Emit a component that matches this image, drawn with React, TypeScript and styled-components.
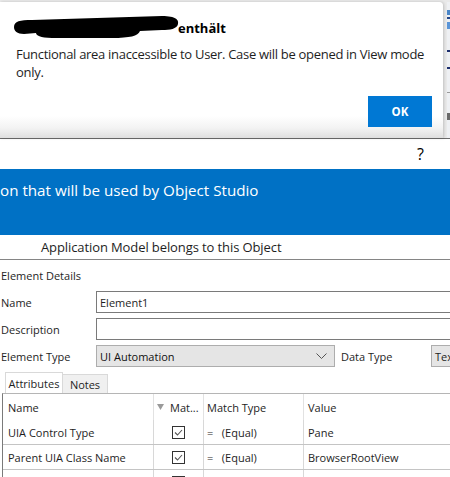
import React from "react";
import styled, { createGlobalStyle } from "styled-components";

const GlobalStyle = createGlobalStyle`
  html, body {
    margin: 0;
    padding: 0;
    background: #fff;
  }
  body {
    width: 450px;
    height: 477px;
    overflow: hidden;
    font-family: "Open Sans", "Noto Sans", sans-serif;
    color: #1e1e1e;
  }
  * {
    box-sizing: border-box;
  }
`;

const attributes = [
  { name: "UIA Control Type", match: true, value: "Pane" },
  { name: "Parent UIA Class Name", match: true, value: "BrowserRootView" },
  { name: "UIA Name", match: false, value: "AAS" },
];

const stripMarks = [
  { mt: 8, h: 5, c: "#4a86c8" },
  { mt: 2, h: 2, c: "#23468a" },
  { mt: 3, h: 7, c: "#5a95d8" },
  { mt: 21, h: 2, c: "#1d2f6e" },
  { mt: 15, h: 2, c: "#1d2f6e" },
  { mt: 23, h: 1, c: "#9a9a9a" },
  { mt: 20, h: 7, c: "#6a6a6a" },
];

function Redaction() {
  return (
    <svg width="168" height="26" viewBox="0 0 168 26">
      <path
        d="M2 13 C2 7 8 6 20 6 L150 2 C164 2 167 6 166 10 C165 15 158 16 150 16
           L128 17 C126 22 118 24 100 24 L40 24 C28 24 24 21 24 19
           L12 20 C5 20 2 17 2 13 Z"
        fill="#000"
      />
    </svg>
  );
}

function CheckBox({ checked }: { checked: boolean }) {
  return (
    <svg width="13" height="13" viewBox="0 0 13 13">
      <rect x="0.5" y="0.5" width="12" height="12" fill="#fff" stroke="#333" />
      {checked && (
        <polyline
          points="3,6.5 5.5,9 10,4"
          fill="none"
          stroke="#555"
          strokeWidth="1.1"
        />
      )}
    </svg>
  );
}

function App() {
  return (
    <>
      <GlobalStyle />
      <Overlay>
        <Dialog>
          <DialogTitle>
            <Redaction />
            <span>enthält</span>
          </DialogTitle>
          <DialogText>
            Functional area inaccessible to User. Case will be opened in View
            mode only.
          </DialogText>
          <OkButton>OK</OkButton>
        </Dialog>
        <Strip>
          {stripMarks.map((m, i) => (
            <StripMark key={i} $mt={m.mt} $h={m.h} $c={m.c} />
          ))}
        </Strip>
      </Overlay>

      <Window>
        <TitleBar>?</TitleBar>
        <Banner>on that will be used by Object Studio</Banner>
        <SubRow>Application Model belongs to this Object</SubRow>

        <Form>
          <SectionTitle>Element Details</SectionTitle>
          <FieldGrid>
            <Label>Name</Label>
            <TextBox>Element1</TextBox>
            <Label>Description</Label>
            <TextBox />
            <Label>Element Type</Label>
            <TypeRow>
              <Select>
                <span>UI Automation</span>
                <svg width="11" height="6" viewBox="0 0 11 6">
                  <polyline
                    points="0.5,0.5 5.5,5.5 10.5,0.5"
                    fill="none"
                    stroke="#555"
                    strokeWidth="1"
                  />
                </svg>
              </Select>
              <DataTypeLabel>Data Type</DataTypeLabel>
              <DataTypeBox>Tex</DataTypeBox>
            </TypeRow>
          </FieldGrid>
        </Form>

        <Tabs>
          <Tab $active>Attributes</Tab>
          <Tab>Notes</Tab>
        </Tabs>

        <Table>
          <HeaderRow>
            <HeadCell>Name</HeadCell>
            <HeadCell $light>
              <svg width="7" height="6" viewBox="0 0 7 6">
                <polygon points="0,0 7,0 3.5,6" fill="#9a9a9a" />
              </svg>
              <FilterText>Mat...</FilterText>
            </HeadCell>
            <HeadCell>Match Type</HeadCell>
            <HeadCell $last>Value</HeadCell>
          </HeaderRow>
          {attributes.map((a) => (
            <BodyRow key={a.name}>
              <Cell>{a.name}</Cell>
              <Cell $center>
                <CheckBox checked={a.match} />
              </Cell>
              <Cell $pre>{"=   (Equal)"}</Cell>
              <Cell $last>{a.value}</Cell>
            </BodyRow>
          ))}
        </Table>
      </Window>
    </>
  );
}

const Overlay = styled.div`
  display: flex;
  height: 138px;
  padding-top: 2px;
  background: #e9e9e9;
`;

const Dialog = styled.div`
  width: 443px;
  margin-right: 4px;
  display: flex;
  flex-direction: column;
  border-top-right-radius: 4px;
  box-shadow: 1px 0 3px rgba(0, 0, 0, 0.18);
  background: linear-gradient(
    180deg,
    #fff 0,
    #fff 114px,
    #f3f3f3 126px,
    #dedede 136px
  );
`;

const DialogTitle = styled.div`
  display: flex;
  align-items: center;
  height: 26px;
  margin-top: 12px;
  padding-left: 12px;
  font-size: 13px;
  font-weight: 700;
  color: #000;

  svg {
    flex-shrink: 0;
  }

  span {
    margin-left: -2px;
    margin-top: 2px;
  }
`;

const DialogText = styled.div`
  margin-top: 5px;
  padding: 0 16px;
  font-size: 13px;
  letter-spacing: -0.3px;
  line-height: 18px;
  color: #1e1e1e;
`;

const OkButton = styled.button`
  align-self: flex-end;
  width: 64px;
  height: 31px;
  margin-top: 15px;
  margin-right: 11px;
  border: none;
  background: #0078d4;
  color: #fff;
  font-family: "Open Sans", sans-serif;
  font-size: 11.5px;
  font-weight: 700;
  padding: 0;
`;

const Strip = styled.div`
  flex: 1;
  display: flex;
  flex-direction: column;
  background: #eef0f3;
`;

const StripMark = styled.div<{ $mt: number; $h: number; $c: string }>`
  margin-top: ${(p) => p.$mt}px;
  height: ${(p) => p.$h}px;
  background: ${(p) => p.$c};
`;

const Window = styled.div`
  border-top: 1px solid #6b6b6b;
  background: #fff;
`;

const TitleBar = styled.div`
  height: 30px;
  display: flex;
  align-items: center;
  justify-content: flex-end;
  padding-right: 26px;
  font-size: 16px;
  color: #000;
`;

const Banner = styled.div`
  height: 66px;
  padding-top: 11px;
  background: #0071c5;
  color: #fff;
  font-size: 15.2px;
  line-height: 20px;
  white-space: nowrap;
`;

const SubRow = styled.div`
  height: 25px;
  padding-left: 41px;
  border-bottom: 1px solid #858585;
  font-size: 13px;
  letter-spacing: -0.1px;
  line-height: 24px;
`;

const Form = styled.div`
  padding-top: 8px;
  font-size: 11px;
`;

const SectionTitle = styled.div`
  height: 16px;
  line-height: 16px;
  padding-left: 1px;
`;

const FieldGrid = styled.div`
  display: grid;
  grid-template-columns: 96px 1fr;
  grid-auto-rows: 22px;
  row-gap: 5px;
  margin-top: 7px;
`;

const Label = styled.div`
  display: flex;
  align-items: center;
  padding-left: 1px;
`;

const TextBox = styled.div`
  margin-right: -20px;
  padding-left: 3px;
  border: 1px solid #7a7a7a;
  display: flex;
  align-items: center;
`;

const TypeRow = styled.div`
  display: flex;
  margin-right: -20px;
`;

const Select = styled.div`
  width: 239px;
  display: flex;
  align-items: center;
  justify-content: space-between;
  padding: 0 7px 0 3px;
  background: #e5e5e5;
  border: 1px solid #adadad;
  color: #111;
`;

const DataTypeLabel = styled.div`
  width: 96px;
  padding-left: 6px;
  display: flex;
  align-items: center;
`;

const DataTypeBox = styled.div`
  flex: 1;
  display: flex;
  align-items: center;
  padding-left: 3px;
  background: #e5e5e5;
  border: 1px solid #adadad;
`;

const Tabs = styled.div`
  display: flex;
  align-items: flex-end;
  height: 21px;
  margin-top: 5px;
  padding-left: 5px;
  font-size: 11px;
`;

const Tab = styled.div<{ $active?: boolean }>`
  display: flex;
  align-items: center;
  justify-content: center;
  width: ${(p) => (p.$active ? 58 : 45)}px;
  height: ${(p) => (p.$active ? 21 : 19)}px;
  background: ${(p) => (p.$active ? "#fff" : "#f0f0f0")};
  border: 1px solid #d9d9d9;
  border-bottom: none;
  border-left: ${(p) => (p.$active ? "1px solid #d9d9d9" : "none")};
`;

const Table = styled.div`
  margin-left: 2px;
  border-left: 1px solid #7a7a7a;
  border-top: 1px solid #b5b5b5;
  font-size: 11px;
`;

const columns = "151px 50px 100px 1fr";

const HeaderRow = styled.div`
  display: grid;
  grid-template-columns: ${columns};
  height: 26px;
`;

const HeadCell = styled.div<{ $light?: boolean; $last?: boolean }>`
  display: flex;
  align-items: center;
  padding-left: ${(p) => (p.$light ? 3 : p.$last ? 4 : 5)}px;
  border-right: ${(p) => (p.$last ? "none" : "1px solid #e2e2e2")};
  overflow: hidden;
  white-space: nowrap;

  &:nth-child(3) {
    padding-left: 3px;
  }
`;

const FilterText = styled.span`
  margin-left: 6px;
`;

const BodyRow = styled.div`
  display: grid;
  grid-template-columns: ${columns};
  height: 25px;
  border-bottom: 1px solid #c4c4c4;
`;

const Cell = styled.div<{ $center?: boolean; $pre?: boolean; $last?: boolean }>`
  display: flex;
  align-items: center;
  justify-content: ${(p) => (p.$center ? "center" : "flex-start")};
  padding-left: ${(p) => (p.$center ? 0 : p.$pre ? 3 : p.$last ? 4 : 5)}px;
  border-right: ${(p) => (p.$last ? "none" : "1px solid #d8d8d8")};
  white-space: ${(p) => (p.$pre ? "pre" : "nowrap")};
  overflow: hidden;
`;

export default App;
